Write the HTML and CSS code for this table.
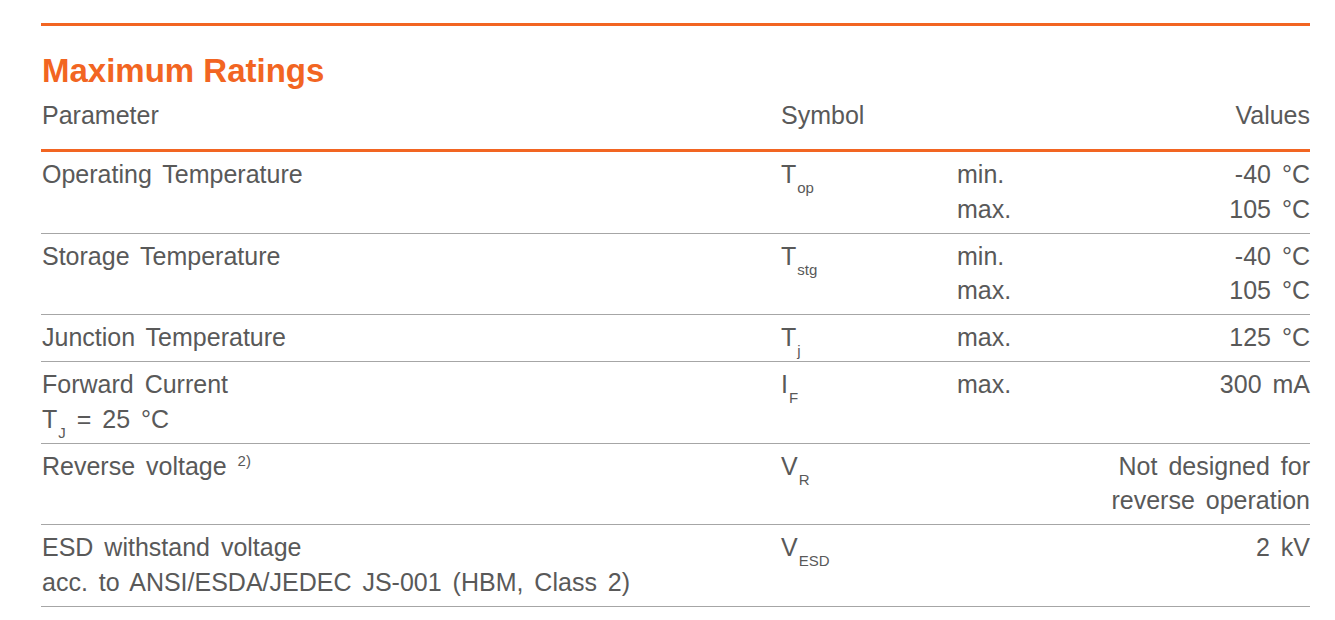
FILE: index.html
```html
<!DOCTYPE html>
<html lang="en">
<head>
<meta charset="utf-8">
<title>Maximum Ratings</title>
<link rel="stylesheet" href="styles.css">
</head>
<body>
<section class="ratings">
  <h2 class="title">Maximum Ratings</h2>
  <div class="row head">
    <div class="param">Parameter</div>
    <div class="sym">Symbol</div>
    <div class="cond"></div>
    <div class="val">Values</div>
  </div>
  <div class="row">
    <div class="param">Operating Temperature</div>
    <div class="sym">T<sub>op</sub></div>
    <div class="cond">min.<br>max.</div>
    <div class="val">-40 °C<br>105 °C</div>
  </div>
  <div class="row">
    <div class="param">Storage Temperature</div>
    <div class="sym">T<sub>stg</sub></div>
    <div class="cond">min.<br>max.</div>
    <div class="val">-40 °C<br>105 °C</div>
  </div>
  <div class="row">
    <div class="param">Junction Temperature</div>
    <div class="sym">T<sub>j</sub></div>
    <div class="cond">max.</div>
    <div class="val">125 °C</div>
  </div>
  <div class="row">
    <div class="param">Forward Current<br>T<sub>J</sub> = 25 °C</div>
    <div class="sym">I<sub>F</sub></div>
    <div class="cond">max.</div>
    <div class="val">300 mA</div>
  </div>
  <div class="row">
    <div class="param">Reverse voltage <sup>2)</sup></div>
    <div class="sym">V<sub>R</sub></div>
    <div class="cond"></div>
    <div class="val">Not designed for<br>reverse operation</div>
  </div>
  <div class="row">
    <div class="param">ESD withstand voltage<br>acc. to ANSI/ESDA/JEDEC JS-001 (HBM, Class 2)</div>
    <div class="sym">V<sub>ESD</sub></div>
    <div class="cond"></div>
    <div class="val">2 kV</div>
  </div>
</section>
</body>
</html>
```
FILE: styles.css
```css
html, body {
  margin: 0;
  padding: 0;
  background: #ffffff;
}

body {
  font-family: "Liberation Sans", Arial, sans-serif;
  color: #595959;
  padding: 23px 25px 0 41px;
}

.ratings {
  width: 1269px;
  border-top: 3px solid #f26522;
}

.title {
  margin: 25px 0 0 1px;
  font-size: 33px;
  line-height: 40px;
  font-weight: bold;
  color: #f26522;
}

.row {
  display: grid;
  grid-template-columns: 739px 176px 1fr auto;
  font-size: 25px;
  line-height: 34.5px;
  word-spacing: 4px;
  padding: 5px 0 6.5px 1px;
  border-bottom: 1px solid #a6a6a6;
}

.row.head {
  padding: 7px 0 16.5px 1px;
  border-bottom: 3px solid #f26522;
}

.val {
  text-align: right;
}

sub {
  font-size: 15px;
  line-height: 0;
  vertical-align: -10px;
  margin-left: 1px;
}

sup {
  font-size: 15px;
  line-height: 0;
  vertical-align: 9px;
  margin-left: 0;
}
```
